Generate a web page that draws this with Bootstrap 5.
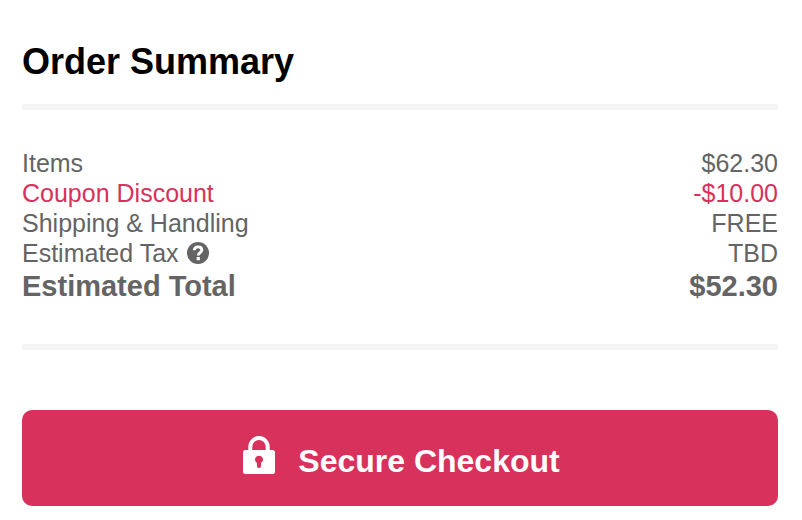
<!DOCTYPE html>
<html lang="en">
<head>
<meta charset="utf-8">
<meta name="viewport" content="width=device-width, initial-scale=1">
<title>Order Summary</title>
<link href="https://cdn.jsdelivr.net/npm/bootstrap@5.3.0/dist/css/bootstrap.min.css" rel="stylesheet">
<style>
  body { font-family: "Liberation Sans", Arial, sans-serif; color: #646464; background: #fff; }
  .summary { padding: 42px 24px 14px 22px; }
  .summary-title { font-size: 36px; line-height: 40px; color: #000; }
  .rule { height: 6px; background: #f4f4f4; border: 0; opacity: 1; }
  .rule-top { margin: 22px 0 38px; }
  .rule-bottom { margin: 40px 0 60px; }
  .totals { font-size: 25px; line-height: 30px; }
  .totals th, .totals td { padding: 0; }
  .totals th { font-weight: 400; }
  .totals .discount { color: #d8315b; }
  .totals .grand th, .totals .grand td { font-size: 29px; line-height: 36px; font-weight: 700; }
  .help { color: inherit; line-height: 22px; }
  .help svg { display: block; }
  .checkout { --bs-btn-bg: #d8315b; --bs-btn-hover-bg: #c02a50; --bs-btn-active-bg: #ad2547;
    --bs-btn-color: #fff; --bs-btn-hover-color: #fff; --bs-btn-active-color: #fff;
    --bs-btn-border-width: 0; --bs-btn-border-radius: 10px;
    --bs-btn-font-size: 32px; --bs-btn-line-height: 34px; --bs-btn-font-weight: 700;
    padding: 26px 20px 28px 23px; gap: 23px; }
</style>
<script src="https://cdn.jsdelivr.net/npm/bootstrap@5.3.0/dist/js/bootstrap.bundle.min.js" defer></script>
</head>
<body>
<main class="summary">
  <h1 class="summary-title fw-bold mb-0">Order Summary</h1>
  <hr class="rule rule-top">
  <table class="totals w-100">
    <tbody>
      <tr><th scope="row">Items</th><td class="text-end">$62.30</td></tr>
      <tr class="discount"><th scope="row">Coupon Discount</th><td class="text-end">-$10.00</td></tr>
      <tr><th scope="row">Shipping &amp; Handling</th><td class="text-end">FREE</td></tr>
      <tr>
        <th scope="row">
          <div class="d-flex align-items-center gap-2">
            <span>Estimated Tax</span>
            <button type="button" class="help border-0 bg-transparent p-0" aria-label="About estimated tax">
              <svg width="22" height="22" viewBox="0 0 22 22" aria-hidden="true">
                <circle cx="11" cy="11" r="11" fill="currentColor"/>
                <path d="M7.300 8.300C7.400 6 9 4.900 11.100 4.900c2.300 0 3.700 1.200 3.700 3 0 2.700-3.500 2.700-3.500 5.500" fill="none" stroke="#fff" stroke-width="2.900"/>
                <rect x="9.700" y="15" width="3.200" height="3.200" rx=".5" fill="#fff"/>
              </svg>
            </button>
          </div>
        </th>
        <td class="text-end">TBD</td>
      </tr>
    </tbody>
    <tfoot>
      <tr class="grand"><th scope="row">Estimated Total</th><td class="text-end">$52.30</td></tr>
    </tfoot>
  </table>
  <hr class="rule rule-bottom">
  <button type="button" class="btn checkout w-100 d-flex justify-content-center align-items-end">
    <svg class="mb-1" width="32" height="38" viewBox="0 0 32 38" aria-hidden="true">
      <path d="M7.300 15V10.700a8.700 8.700 0 0 1 17.400 0V15" fill="none" stroke="#fff" stroke-width="4"/>
      <path fill="#fff" fill-rule="evenodd" d="M2.500 14h27A2.500 2.500 0 0 1 32 16.500V35.500A2.500 2.500 0 0 1 29.500 38H2.500A2.500 2.500 0 0 1 0 35.500V16.500A2.500 2.500 0 0 1 2.500 14ZM14 27.100V30a2 2 0 0 0 4 0V27.100a4 4 0 1 0-4 0Z"/>
    </svg>
    <span>Secure Checkout</span>
  </button>
</main>
</body>
</html>
